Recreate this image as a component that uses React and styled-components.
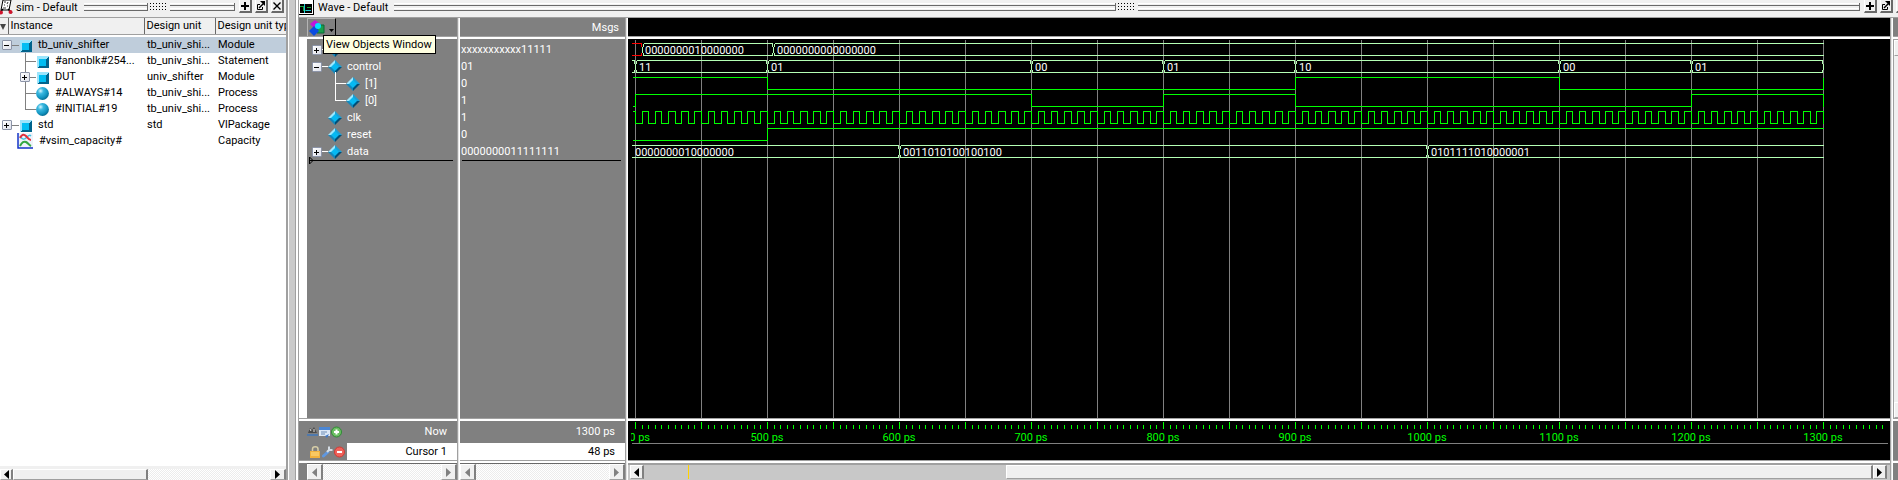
import React from "react";
import styled, { createGlobalStyle, css } from "styled-components";

const c = {
  face: "#f0f0f0",
  grey: "#808080",
  edge: "#a0a0a0",
  dark: "#696969",
  sash: "#cacaca",
  green: "#00ff00",
  bus: "#b4ffb4",
};

const fontStack = `Roboto, "Noto Sans", sans-serif`;

const GlobalStyle = createGlobalStyle`
  * { box-sizing: border-box; }
  body {
    margin: 0;
    background: ${c.face};
    color: #000;
    font: 11px/16px ${fontStack};
  }
  button { font: inherit; padding: 0; margin: 0; }
`;

const Workspace = styled.div`
  display: flex;
  min-height: 100vh;
  overflow: hidden;
`;

/* ---------- shared window parts ---------- */

const TitleBar = styled.header`
  display: flex;
  align-items: flex-start;
  flex: none;
  height: 18px;
  overflow: hidden;
  background: ${c.face};
  border-bottom: 1px solid ${c.edge};
`;

const TitleIcon = styled.span`
  flex: none;
  width: 15px;
  height: 16px;
  svg { display: block; }
`;

const Title = styled.h2`
  margin: 0;
  padding: 0 6px 0 ${(p) => p.$indent}px;
  font-size: 11px;
  font-weight: 400;
  line-height: 15px;
  white-space: nowrap;
`;

const Grip = styled.div`
  flex: 1;
  display: flex;
  align-items: center;
  gap: 2px;
  height: 8px;
  margin: 3px 4px 0 0;
`;

const GripRail = styled.span`
  flex: 1;
  height: 8px;
  border: solid ${c.dark};
  border-width: 0 1px 1px 0;
  background: linear-gradient(
    #fff 0 1px, ${c.face} 1px 2px, ${c.dark} 2px 3px, ${c.face} 3px 5px, #fff 5px 6px, ${c.face} 6px
  );
`;

const GripDots = styled.span`
  width: 18px;
  height: 8px;
  background: linear-gradient(90deg, #000 1px, transparent 1px) 0 0 / 3px 100%;
  mask: linear-gradient(#000 1px, transparent 1px) 0 0 / 100% 3px;
`;

const TitleButtons = styled.div`
  display: flex;
  gap: 3px;
  margin-right: ${(p) => p.$inset}px;
`;

const TitleButton = styled.button`
  width: 13px;
  height: 13px;
  border: solid;
  border-width: 0 2px 2px 1px;
  border-color: #fff ${c.dark} ${c.dark} #fff;
  background: ${c.face};
  svg { display: block; }
`;

const PlusGlyph = () => (
  <svg width="10" height="11" shapeRendering="crispEdges">
    <path d="M4 2h2v3h3v2h-3v3h-2v-3h-3v-2h3z" />
  </svg>
);
const UndockGlyph = () => (
  <svg width="10" height="11" viewBox="0 0 10 11" fill="none" stroke="#000">
    <path d="M4 4.5H1.500V9.500H6.500V7" />
    <path d="M3 8L7.500 3.500" strokeWidth="1.500" />
    <path d="M4 1H9V6Z" fill="#000" stroke="none" />
  </svg>
);
const CloseGlyph = () => (
  <svg width="10" height="11" viewBox="0 0 10 11" stroke="#000" strokeWidth="1.400">
    <path d="M1.500 2.500L8.500 9.500M8.500 2.500L1.500 9.500" />
  </svg>
);

const WindowButtons = ({ inset }) => (
  <TitleButtons $inset={inset}>
    <TitleButton aria-label="Zoom window"><PlusGlyph /></TitleButton>
    <TitleButton aria-label="Undock window"><UndockGlyph /></TitleButton>
    <TitleButton aria-label="Close window"><CloseGlyph /></TitleButton>
  </TitleButtons>
);

const DragGrip = () => (
  <Grip>
    <GripRail />
    <GripDots />
    <GripRail />
  </Grip>
);

const checker = css`
  background: repeating-conic-gradient(#fff 0 25%, #ececec 0 50%) 0 0 / 2px 2px;
`;

const ScrollTrack = styled.div`
  flex: none;
  display: flex;
  height: ${(p) => p.$height}px;
  padding: ${(p) => p.$pad || "0"};
  ${(p) => (p.$solid ? `background: #c8c8c8; border-top: 2px solid ${c.edge};` : checker)}
  ${(p) => p.$ruled && `border-top: 1px solid ${c.dark};`}
`;

const ScrollButton = styled.button`
  flex: none;
  width: ${(p) => p.$width || 16}px;
  display: flex;
  align-items: center;
  justify-content: center;
  border: solid;
  border-width: 1px 2px 1px 1px;
  border-color: #fff ${c.grey} ${c.edge} #fff;
  background: ${c.face};
`;

const ScrollThumb = styled.div`
  flex: ${(p) => p.$flex};
  border: solid;
  border-width: 1px 2px 1px 1px;
  border-color: #fff ${c.grey} ${c.edge} #fff;
  background: ${c.face};
`;

const ScrollSpace = styled.div`
  flex: ${(p) => p.$flex};
  display: flex;
`;

const Arrow = ({ dir, color = "#000" }) => (
  <svg width="5" height="9" viewBox="0 0 5 9" fill={color}>
    <path d={dir === "left" ? "M5 0V9L0 4.500Z" : "M0 0V9L5 4.500Z"} />
  </svg>
);

/* ---------- tree parts, used by both windows ---------- */

const TreeLine = styled.div`
  display: flex;
  align-items: center;
  height: ${(p) => p.$height}px;
  white-space: nowrap;
`;

const Slot = styled.span`
  position: relative;
  flex: none;
  display: flex;
  align-items: center;
  height: 100%;
  width: ${(p) => p.$width}px;
  padding-left: ${(p) => p.$pad}px;
  ${(p) =>
    p.$trunk &&
    css`
      &::before {
        content: "";
        position: absolute;
        left: ${p.$trunk}px;
        top: -3px;
        bottom: ${p.$last ? "50%" : "0"};
        width: 1px;
        background: ${p.$color};
      }
    `}
`;

const Branch = styled.span`
  flex: 1;
  height: 1px;
  background: ${(p) => p.$color};
`;

const Expander = styled.button`
  position: relative;
  flex: none;
  width: 10px;
  height: 10px;
  border: 1px solid #8c94a8;
  border-radius: 1px;
  background: linear-gradient(135deg, #fff, #dde0ea);
  svg { display: block; }
`;

const TreeExpander = ({ open, label }) => (
  <Expander aria-label={(open ? "Collapse " : "Expand ") + label} aria-expanded={!!open}>
    <svg width="8" height="8" shapeRendering="crispEdges">
      <path d={open ? "M1 4h5v1h-5z" : "M1 4h5v1h-5zM3 2h1v5h-1z"} />
    </svg>
  </Expander>
);

const TreeText = styled.span`
  padding-left: ${(p) => p.$gap}px;
`;

const CubeIcon = () => (
  <svg width="13" height="13" viewBox="0 0 13 13" shapeRendering="crispEdges">
    <rect x="1" y="1" width="12" height="12" fill="#00638c" />
    <path d="M1 1H13L1 13Z" fill="#9be4fb" />
    <rect x="3" y="4" width="7" height="7" fill="#00bdf2" />
  </svg>
);
const BallIcon = () => (
  <svg width="13" height="13" viewBox="0 0 13 13">
    <defs>
      <radialGradient id="ball" cx="0.35" cy="0.3" r="0.75">
        <stop offset="0" stopColor="#d8f6ff" />
        <stop offset="0.300" stopColor="#3ab8e0" />
        <stop offset="0.700" stopColor="#1496c2" />
        <stop offset="1" stopColor="#05698f" />
      </radialGradient>
    </defs>
    <circle cx="6.500" cy="6.500" r="6.400" fill="url(#ball)" />
  </svg>
);
const CapacityIcon = () => (
  <svg width="16" height="16" viewBox="0 0 16 16" fill="none">
    <rect x="1" y="0" width="15" height="15" fill="#eef3fb" />
    <path d="M1 0V15H16" stroke="#1534c8" strokeWidth="1.500" />
    <path d="M3 3C6 8 8 6 10 4S13 2 14 3" stroke="#3fc4e4" strokeWidth="1.500" />
    <path d="M3 5C5 1 7 1 9 3S12 7 14 7" stroke="#e0303c" strokeWidth="2" />
    <path d="M3 13C5 9 7 8 9 9S12 12 14 13" stroke="#35a843" strokeWidth="2" />
  </svg>
);
const DiamondIcon = () => (
  <svg width="14" height="14" viewBox="0 0 14 14">
    <path d="M7 0L0 7H7Z" fill="#9be8ff" />
    <path d="M7 0L14 7H7Z" fill="#1a9fd6" />
    <path d="M0 7L7 14V7Z" fill="#1487bb" />
    <path d="M14 7L7 14V7Z" fill="#004f78" />
    <path d="M7 3L11 7L7 11L3 7Z" fill="#06b9f2" />
  </svg>
);

/* ---------- sim window ---------- */

const SimWindow = styled.section`
  flex: none;
  display: flex;
  flex-direction: column;
  width: 288px;
  background: #fff;
  border-right: 2px solid ${c.edge};
`;

const SimTable = styled.table`
  width: 286px;
  table-layout: fixed;
  border-collapse: collapse;
  tbody::before { content: ""; display: block; height: 2px; }
`;

const Head = styled.th`
  width: ${(p) => p.$width}px;
  height: 16px;
  padding: 0 0 0 2px;
  overflow: hidden;
  text-align: left;
  font-weight: 400;
  white-space: nowrap;
  background: ${c.face};
  border-right: ${(p) => (p.$open ? "0" : `1px solid ${c.dark}`)};
  border-bottom: 1px solid ${c.edge};
`;

const SortButton = styled.button`
  display: block;
  width: 6px;
  height: 14px;
  margin-left: -2px;
  border: 0;
  background: none;
`;

const SimRow = styled.tr`
  background: ${(p) => (p.$selected ? "#bfcddb" : "transparent")};
`;

const Cell = styled.td`
  height: 16px;
  padding: 0 0 0 ${(p) => (p.$flush ? 0 : 3)}px;
  line-height: 16px;
  white-space: nowrap;
  overflow: hidden;
`;

const Fill = styled.div`
  flex: 1;
  border-bottom: 3px solid ${c.face};
`;

const Sash = styled.div`
  flex: none;
  width: 11px;
  background: linear-gradient(
    90deg, #fff 0 1px, ${c.sash} 1px 7px, ${c.edge} 7px 8px, #fff 8px 10px, ${c.edge} 10px
  );
`;

const instances = [
  { name: "tb_univ_shifter", unit: "tb_univ_shi...", type: "Module", icon: "cube", box: "open", selected: true },
  { name: "#anonblk#254...", unit: "tb_univ_shi...", type: "Statement", icon: "cube", child: true },
  { name: "DUT", unit: "univ_shifter", type: "Module", icon: "cube", child: true, box: "closed" },
  { name: "#ALWAYS#14", unit: "tb_univ_shi...", type: "Process", icon: "ball", child: true },
  { name: "#INITIAL#19", unit: "tb_univ_shi...", type: "Process", icon: "ball", child: true, last: true },
  { name: "std", unit: "std", type: "VlPackage", icon: "cube", box: "closed" },
  { name: "#vsim_capacity#", unit: "", type: "Capacity", icon: "capacity" },
];

const simIcons = { cube: <CubeIcon />, ball: <BallIcon />, capacity: <CapacityIcon /> };

function simPad(r) {
  if (!r.child) return r.box ? 2 : 17;
  return r.box ? 20 : 25;
}

function InstanceRow({ row }) {
  const width = row.child ? 36 : row.box ? 19 : 17;
  return (
    <SimRow $selected={row.selected}>
      <Cell colSpan={2} $flush>
        <TreeLine $height={16}>
          <Slot $width={width} $pad={simPad(row)} $trunk={row.child && 25} $last={row.last} $color={c.grey}>
            {row.box && <TreeExpander open={row.box === "open"} label={row.name} />}
            {(row.box || row.child) && <Branch $color={c.grey} />}
          </Slot>
          {simIcons[row.icon]}
          <TreeText $gap={6}>{row.name}</TreeText>
        </TreeLine>
      </Cell>
      <Cell>{row.unit}</Cell>
      <Cell>{row.type}</Cell>
    </SimRow>
  );
}

const Sim = () => (
  <SimWindow>
    <TitleBar>
      <TitleIcon>
        <svg width="14" height="15" viewBox="0 0 14 15" fill="none">
          <path d="M3 0H11L9 10H1Z" fill="#fff" stroke="#000" />
          <path d="M4 2H6M8 2L7 4M4 5H5M7 6H8M3 8H6" stroke="#333" />
          <path d="M0 12L3 9M8 9L12 13" stroke="#000" strokeWidth="1.500" />
          <circle cx="1" cy="12.500" r="2" fill="#d0142c" />
          <circle cx="10.500" cy="12" r="2" fill="#d0142c" />
        </svg>
      </TitleIcon>
      <Title $indent={1}>sim - Default</Title>
      <DragGrip />
      <WindowButtons inset={2} />
    </TitleBar>
    <SimTable>
      <thead>
        <tr>
          <Head $width={8}>
            <SortButton aria-label="Sort instances">
              <svg width="6" height="6" viewBox="0 0 6 6"><path d="M0 0H6L3 6Z" fill="#444" /></svg>
            </SortButton>
          </Head>
          <Head $width={136}>Instance</Head>
          <Head $width={71}>Design unit</Head>
          <Head $width={71} $open>Design unit type</Head>
        </tr>
      </thead>
      <tbody>
        {instances.map((row) => <InstanceRow key={row.name} row={row} />)}
      </tbody>
    </SimTable>
    <Fill />
    <ScrollTrack $height={11}>
      <ScrollButton $width={13} aria-label="Scroll left"><Arrow dir="left" /></ScrollButton>
      <ScrollThumb $flex={134} />
      <ScrollSpace $flex={124} />
      <ScrollButton $width={16} aria-label="Scroll right"><Arrow dir="right" /></ScrollButton>
    </ScrollTrack>
  </SimWindow>
);

/* ---------- wave window ---------- */

const WaveWindow = styled.section`
  flex: 1;
  min-width: 0;
  display: flex;
  flex-direction: column;
`;

const Panes = styled.div`
  flex: 1;
  display: flex;
`;

const Pane = styled.div`
  flex: none;
  width: ${(p) => p.$width}px;
  display: flex;
  flex-direction: column;
  background: ${c.grey};
  color: #fff;
`;

const PlotPane = styled(Pane)`
  flex: 1;
  width: auto;
  min-width: 0;
  background: #000;
`;

const PaneSash = styled.div`
  flex: none;
  width: 3px;
  background: linear-gradient(90deg, ${c.edge} 0 1px, #e4e4e4 1px 2px, #fff 2px);
`;

const PaneRule = styled.div`
  flex: none;
  height: 3px;
  background: linear-gradient(${c.edge} 0 1px, #fff 1px);
`;

const PaneHead = styled.div`
  flex: none;
  display: flex;
  justify-content: ${(p) => (p.$right ? "flex-end" : "flex-start")};
  height: 18px;
  padding: ${(p) => (p.$right ? "2px 6px 0 0" : "0 0 0 8px")};
`;

const PaneBody = styled.div`
  flex: 1;
  padding-top: ${(p) => (p.$plot ? 0 : 2)}px;
  border-left: ${(p) => (p.$margin ? "8px solid #fff" : "0")};
  overflow: hidden;
`;

const ToolAnchor = styled.div`
  position: relative;
`;

const ToolButton = styled.button`
  display: flex;
  align-items: center;
  gap: 4px;
  width: 29px;
  height: 18px;
  padding-left: 1px;
  border: 0;
  border-top: 1px solid #b4b4b4;
  border-left: 1px solid #b4b4b4;
  border-right: 1px solid #000;
  background: ${c.grey};
`;

const Caret = styled.svg`
  flex: none;
  align-self: flex-end;
  margin-bottom: 4px;
`;

const Tooltip = styled.div`
  position: absolute;
  z-index: 2;
  left: 16px;
  top: 17px;
  height: 19px;
  padding: 0 3px 0 2px;
  border: 1px solid #000;
  background: #ffffe1;
  color: #000;
  line-height: 18px;
  white-space: nowrap;
`;

const ValueLine = styled.div`
  height: 17px;
  padding-left: 1px;
  line-height: 17px;
`;

const InsertLine = styled.div`
  position: relative;
  height: 1px;
  margin: 0 4px 0 ${(p) => (p.$marker ? 3 : 2)}px;
  background: #000;
  svg { position: absolute; left: -1px; top: -4px; }
`;

const TimeLine = styled.div`
  flex: none;
  display: flex;
  align-items: center;
  height: 22px;
  padding: 0 10px 0 8px;
`;

const CursorLine = styled(TimeLine)`
  height: 17px;
  padding: 0 10px 0 ${(p) => (p.$icons ? 11 : 0)}px;
  color: #000;
  background: linear-gradient(90deg, ${c.grey} 0 ${(p) => (p.$icons ? 48 : 0)}px, #fff 0);
`;

const IconSet = styled.span`
  display: flex;
  gap: 1px;
`;

const IconButton = styled.button`
  width: 11px;
  height: 12px;
  border: 0;
  background: none;
  svg { display: block; }
`;

const Right = styled.span`
  margin-left: auto;
`;

const SideScroll = styled.div`
  flex: 1;
  display: flex;
  flex-direction: column;
  justify-content: space-between;
  overflow: hidden;
  background: ${c.face};
  border-top: 1px solid ${c.edge};
  border-left: 1px solid ${c.edge};
`;

const SideButton = styled.button`
  width: 16px;
  height: 16px;
  border: 1px solid;
  border-color: #fff ${c.dark} ${c.edge} #fff;
  background: ${c.face};
`;

const SideFoot = styled.div`
  flex: none;
  height: ${(p) => p.$height}px;
`;

const CursorMark = styled.span`
  width: 1px;
  height: 100%;
  margin-left: 44px;
  background: #ffd200;
`;

const Plot = styled.svg`
  display: block;
  text { font: 11px ${fontStack}; }
`;

const signals = [
  { name: "q", value: "xxxxxxxxxxx11111", box: "closed" },
  { name: "control", value: "01", box: "open" },
  { name: "[1]", value: "0", child: true },
  { name: "[0]", value: "1", child: true, last: true },
  { name: "clk", value: "1" },
  { name: "reset", value: "0" },
  { name: "data", value: "0000000011111111", box: "closed" },
];

const SignalRow = ({ row }) => (
  <TreeLine $height={17}>
    <Slot
      $width={row.child ? 39 : 21}
      $pad={row.child ? 28 : 5}
      $trunk={row.child && 28}
      $last={row.last}
      $color="#fff"
    >
      {row.box && <TreeExpander open={row.box === "open"} label={row.name} />}
      {(row.box || row.child) && <Branch $color="#fff" />}
    </Slot>
    <DiamondIcon />
    {row.name !== "q" && <TreeText $gap={5}>{row.name}</TreeText>}
  </TreeLine>
);

/* Horizontal scale of the plot: 132px per 100ps, 500ps sits at x = 139. */
const xOf = (ps) => Math.round(139 + (ps - 500) * 1.32);
const END = xOf(1300);
const HEIGHT = 12;
const gridTimes = Array.from({ length: 19 }, (_, i) => 400 + i * 50);
const tickTimes = Array.from({ length: 190 }, (_, i) => 400 + i * 5);

function busPath(y, starts, open) {
  const b = y + HEIGHT;
  let from = open;
  let d = "";
  starts.forEach((x) => {
    if (x > from) d += `M${from} ${y}H${x - 1}V${y + 3}M${from} ${b}H${x - 1}V${b - 3}`;
    d += `M${x} ${y + 3}V${b - 3}`;
    if (x < END) d += `M${x + 1} ${y + 3}V${y}M${x + 1} ${b - 3}V${b}`;
    from = x + 1;
  });
  if (from < END) d += `M${from} ${y}H${END}M${from} ${b}H${END}`;
  return d;
}

function bitPath(y, level, edges, closing) {
  const at = (v) => (v ? y : y + HEIGHT);
  let v = level;
  let d = `M4 ${at(v)}`;
  edges.forEach((t) => {
    v = !v;
    d += `H${xOf(t)}V${at(v)}`;
  });
  return d + `H${END}` + (closing ? `V${at(!v)}` : "");
}

const clockEdges = Array.from({ length: 180 }, (_, i) => 400 + i * 5);
const controlTimes = [400, 500, 700, 800, 900, 1100, 1200];
const controlValues = ["11", "01", "00", "01", "10", "00", "01"];

const WavePlot = () => (
  <Plot width="1262" height="379" aria-label="Waveforms">
    <g transform="translate(0.5 0.5)" fill="none" shapeRendering="crispEdges">
      <path stroke="#808080" d={gridTimes.map((t) => `M${xOf(t)} 0V379`).join("")} />
      <path stroke="#f00" d="M3 4H13V7M3 16H13V13" />
      <path stroke={c.bus} d={busPath(4, [14, 145], 15)} />
      <path stroke={c.bus} d={busPath(21, [...controlTimes.map(xOf), END], 3)} />
      <path stroke={c.bus} d={busPath(106, [xOf(600), xOf(1000)], 3)} />
      <g stroke={c.green}>
        <path d={bitPath(38, true, [500, 900, 1100], true)} />
        <path d={bitPath(55, false, [400, 700, 800, 900, 1200], true)} />
        <path d={bitPath(72, true, clockEdges, true)} />
        <path d={bitPath(89, false, [500])} />
      </g>
    </g>
    <g fill="#fff">
      <text x="17" y="15">0000000010000000</text>
      <text x="149" y="15">0000000000000000</text>
      {controlTimes.map((t, i) => <text key={t} x={xOf(t) + 4} y="32">{controlValues[i]}</text>)}
      <text x="7" y="117">0000000010000000</text>
      <text x={xOf(600) + 4} y="117">0011010100100100</text>
      <text x={xOf(1000) + 4} y="117">0101111010000001</text>
    </g>
  </Plot>
);

const Ruler = () => (
  <Plot width="1262" height="39" aria-label="Time axis">
    <g transform="translate(0.5 0.5)" fill="none" shapeRendering="crispEdges">
      <path
        stroke={c.green}
        d={tickTimes.map((t) => `M${xOf(t)} ${t % 50 ? 3 : 0}V7`).join("")}
      />
      <path stroke="#808080" d="M3 22H1259" />
    </g>
    <g fill={c.green}>
      <svg x="3" y="0" width="60" height="22">
        <text x="19" y="20" textAnchor="end">0 ps</text>
      </svg>
      {[500, 600, 700, 800, 900, 1000, 1100, 1200, 1300].map((t) => (
        <text key={t} x={xOf(t)} y="20" textAnchor="middle">{t} ps</text>
      ))}
    </g>
  </Plot>
);

const PaneScroll = () => (
  <>
    <ScrollButton aria-label="Scroll left"><Arrow dir="left" color={c.grey} /></ScrollButton>
    <ScrollSpace $flex={1} />
    <ScrollButton aria-label="Scroll right"><Arrow dir="right" color={c.grey} /></ScrollButton>
  </>
);

const ScrollMargin = styled.div`
  display: flex;
  flex-direction: column;
  padding-left: 8px;
`;

const NamesPane = () => (
  <Pane $width={158}>
    <PaneHead>
      <ToolAnchor>
        <ToolButton aria-label="View Objects Window" aria-describedby="objects-tip">
          <svg width="16" height="16" viewBox="0 0 16 16">
            <path d="M6 0L11 4L5 8L1 4Z" fill="#c316d8" />
            <path d="M8 5H15V13H8Z" fill="#1ba04c" stroke="#0b6b34" />
            <path d="M5 6L10 11L5 16L0 11Z" fill="#0b4be0" />
            <circle cx="9" cy="6" r="3" fill="#00e5ff" />
          </svg>
          <Caret width="5" height="3" viewBox="0 0 5 3"><path d="M0 0H5L2.500 3Z" /></Caret>
        </ToolButton>
        <Tooltip id="objects-tip" role="tooltip">View Objects Window</Tooltip>
      </ToolAnchor>
    </PaneHead>
    <PaneRule />
    <PaneBody $margin>
      {signals.map((row) => <SignalRow key={row.name} row={row} />)}
      <InsertLine $marker>
        <svg width="5" height="9" viewBox="0 0 5 9"><path d="M0.500 1V8L4 4.500Z" fill="none" stroke="#000" /></svg>
      </InsertLine>
    </PaneBody>
    <PaneRule />
    <TimeLine>
      <IconSet>
        <IconButton aria-label="Find">
          <svg width="11" height="12" viewBox="0 0 11 12">
            <path d="M1 7L3 2L5 4L7 1L10 7Z" fill="#4a4a4a" />
            <path d="M0 8H11V10H0Z" fill="#4f79ad" />
            <path d="M3 3L4 5M7 3V6" stroke="#ddd" />
          </svg>
        </IconButton>
        <IconButton aria-label="Edit grid and timeline">
          <svg width="11" height="12" viewBox="0 0 11 12">
            <path d="M0 1H11V10H0Z" fill="#dce8f6" />
            <path d="M0 1H11V4H0Z" fill="#4b86d4" />
            <path d="M2 6H8M2 8H6" stroke="#6f8db4" />
            <path d="M6 10L8 12L10 8Z" fill="#3f78c8" />
          </svg>
        </IconButton>
        <IconButton aria-label="Add cursor">
          <svg width="11" height="12" viewBox="0 0 11 12">
            <circle cx="5.500" cy="6" r="5" fill="#6cbf63" stroke="#2f8a35" />
            <path d="M5.500 3.500V8.500M3 6H8" stroke="#fff" strokeWidth="2" />
          </svg>
        </IconButton>
      </IconSet>
      <Right>Now</Right>
    </TimeLine>
    <CursorLine $icons>
      <IconSet>
        <IconButton aria-label="Lock cursor">
          <svg width="11" height="12" viewBox="0 0 11 12">
            <path d="M2.500 5V3A2.500 2 0 0 1 8 3V6" fill="none" stroke="#d8cfa8" strokeWidth="1.500" />
            <path d="M0 5H10V12H0Z" fill="#f0b13c" />
            <path d="M1 7H9M1 9H9" stroke="#ffe08a" />
          </svg>
        </IconButton>
        <IconButton aria-label="Cursor properties">
          <svg width="11" height="12" viewBox="0 0 11 12">
            <path d="M1.500 10L6 6" stroke="#5f97e0" strokeWidth="3" strokeLinecap="round" />
            <path d="M5 6L7 4M7 0.500V4H10.500" fill="none" stroke="#d4dce4" strokeWidth="2" />
          </svg>
        </IconButton>
        <IconButton aria-label="Delete cursor">
          <svg width="11" height="12" viewBox="0 0 11 12">
            <circle cx="5.500" cy="6" r="5" fill="#f0625a" stroke="#d03a34" />
            <path d="M3 6H8" stroke="#fff" strokeWidth="2" />
          </svg>
        </IconButton>
      </IconSet>
      <Right>Cursor 1</Right>
    </CursorLine>
    <PaneRule />
    <ScrollMargin>
      <ScrollTrack $height={17} $ruled><PaneScroll /></ScrollTrack>
    </ScrollMargin>
  </Pane>
);

const ValuesPane = () => (
  <Pane $width={165}>
    <PaneHead $right>Msgs</PaneHead>
    <PaneRule />
    <PaneBody>
      {signals.map((row) => <ValueLine key={row.name}>{row.value}</ValueLine>)}
      <InsertLine />
    </PaneBody>
    <PaneRule />
    <TimeLine><Right>1300 ps</Right></TimeLine>
    <CursorLine><Right>48 ps</Right></CursorLine>
    <PaneRule />
    <ScrollTrack $height={17} $ruled><PaneScroll /></ScrollTrack>
  </Pane>
);

const Wave = () => (
  <WaveWindow>
    <TitleBar>
      <TitleIcon>
        <svg width="15" height="15" viewBox="0 0 15 15" fill="none" shapeRendering="crispEdges">
          <rect width="15" height="15" fill="#fff" />
          <path d="M0 14.500H15M14.500 0V15" stroke="#000" />
          <rect x="1" y="4" width="12" height="9" fill="#000" />
          <path d="M1 6.500H4V10.500H7M8 7.500H12" stroke="#19a33a" />
          <path d="M5.500 4V13M7 10.500H12" stroke="#20c8d8" />
        </svg>
      </TitleIcon>
      <Title $indent={4}>Wave - Default</Title>
      <DragGrip />
      <WindowButtons inset={-11} />
    </TitleBar>
    <Panes>
      <NamesPane />
      <PaneSash />
      <ValuesPane />
      <PaneSash />
      <PlotPane>
        <PaneHead />
        <PaneRule />
        <PaneBody $plot><WavePlot /></PaneBody>
        <PaneRule />
        <Ruler />
        <PaneRule />
        <ScrollTrack $height={17} $solid $pad="0 3px 1px 2px">
          <ScrollButton $width={14} aria-label="Scroll left"><Arrow dir="left" /></ScrollButton>
          <ScrollSpace $flex={363}><CursorMark /></ScrollSpace>
          <ScrollThumb $flex={866} />
          <ScrollButton $width={14} aria-label="Scroll right"><Arrow dir="right" /></ScrollButton>
        </ScrollTrack>
      </PlotPane>
      <PaneSash />
      <Pane $width={5}>
        <SideFoot $height={18} />
        <PaneRule />
        <SideScroll>
          <SideButton aria-label="Scroll up" />
          <SideButton aria-label="Scroll down" />
        </SideScroll>
        <PaneRule />
        <SideFoot $height={39} />
        <PaneRule />
        <SideFoot $height={17} />
      </Pane>
    </Panes>
  </WaveWindow>
);

export default function App() {
  return (
    <Workspace>
      <GlobalStyle />
      <Sim />
      <Sash />
      <Wave />
    </Workspace>
  );
}
